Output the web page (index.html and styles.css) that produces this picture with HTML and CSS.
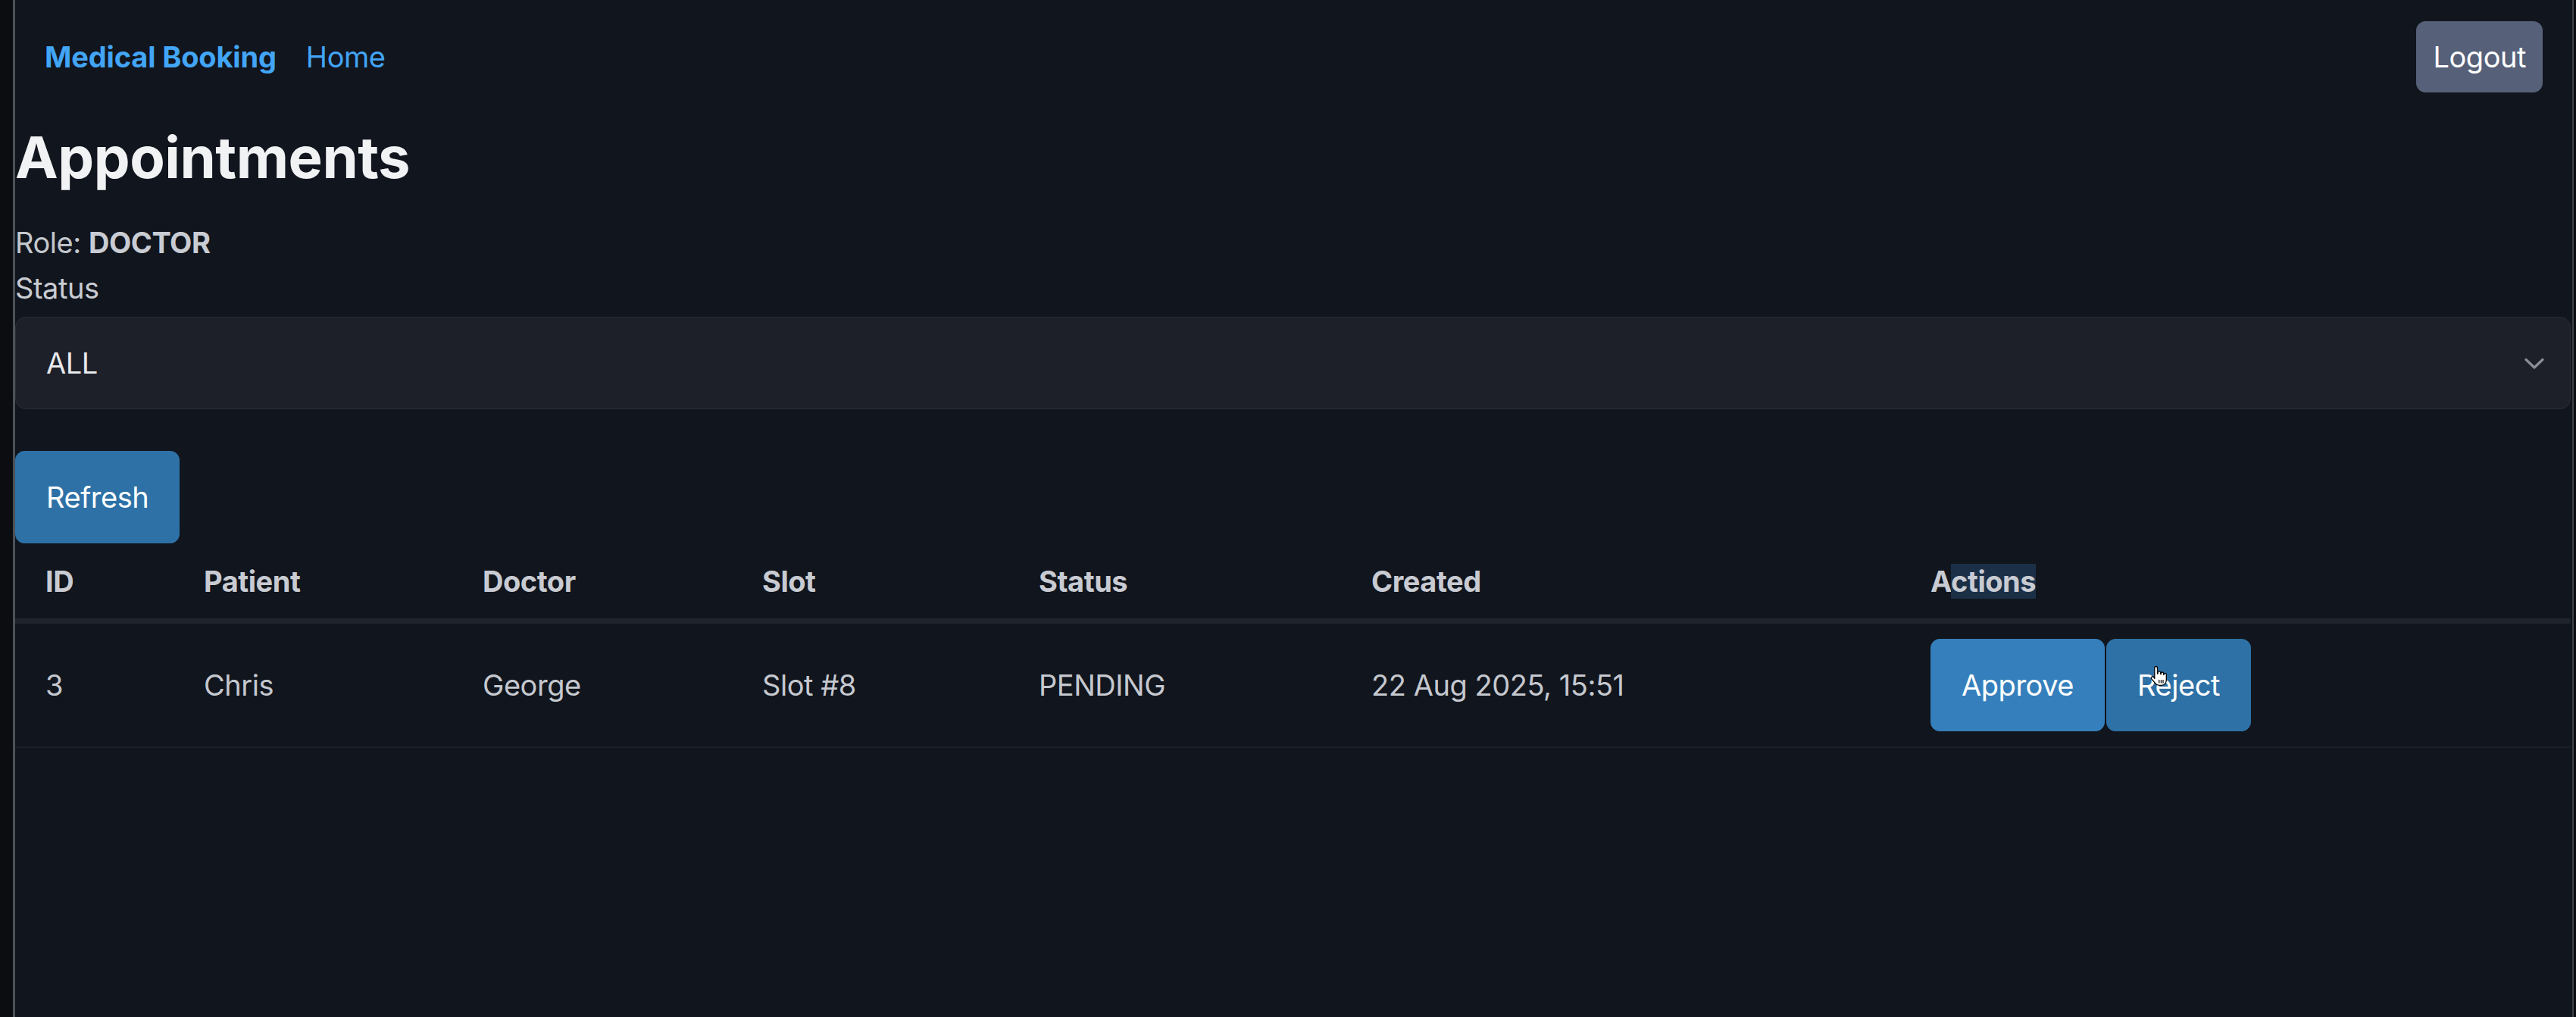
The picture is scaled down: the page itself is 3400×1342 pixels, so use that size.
FILE: index.html
```html
<!DOCTYPE html>
<html lang="en">
<head>
<meta charset="utf-8">
<title>Medical Booking</title>
<link rel="stylesheet" href="styles.css">
</head>
<body>
<div class="frame">
  <div class="page">
    <nav class="nav">
      <div class="nav-left">
        <a class="brand" href="#">Medical Booking</a>
        <a class="nav-link" href="#">Home</a>
      </div>
      <button class="btn btn-logout" type="button">Logout</button>
    </nav>
    <main class="main">
      <h1 class="title">Appointments</h1>
      <div class="role">Role: <strong>DOCTOR</strong></div>
      <label class="field-label" for="status">Status</label>
      <div class="select-wrap">
        <select id="status" class="select">
          <option>ALL</option>
          <option>PENDING</option>
          <option>APPROVED</option>
          <option>REJECTED</option>
        </select>
        <svg class="chevron" width="26" height="16" viewBox="0 0 26 16" aria-hidden="true">
          <path d="M2 2.5 L13 13 L24 2.5" fill="none" stroke="#8b8e97" stroke-width="3.2" stroke-linecap="round" stroke-linejoin="round"/>
        </svg>
      </div>
      <button class="btn btn-primary btn-refresh" type="button">Refresh</button>
      <table class="table">
        <thead>
          <tr>
            <th class="c-id">ID</th>
            <th class="c-patient">Patient</th>
            <th class="c-doctor">Doctor</th>
            <th class="c-slot">Slot</th>
            <th class="c-status">Status</th>
            <th class="c-created">Created</th>
            <th class="c-actions">A<span class="selected">ctions</span></th>
          </tr>
        </thead>
        <tbody>
          <tr>
            <td>3</td>
            <td>Chris</td>
            <td>George</td>
            <td>Slot #8</td>
            <td>PENDING</td>
            <td>22 Aug 2025, 15:51</td>
            <td>
              <div class="actions">
                <button class="btn btn-approve" type="button">Approve</button>
                <button class="btn btn-reject" type="button">Reject
                  <svg class="cursor" width="26" height="30" viewBox="0 0 26 30" aria-hidden="true">
                    <path d="M8.6 1.5c1.1 0 1.9.8 1.9 1.9V11h.6V9.6c0-1 .8-1.7 1.8-1.7s1.7.7 1.7 1.7V11.6h.6V10.6c0-.9.8-1.6 1.7-1.6s1.7.7 1.7 1.6V12.4h.5V11.8c0-.8.7-1.5 1.6-1.5s1.6.7 1.6 1.6V19.5c0 4-2.7 6.8-6.4 6.8h-3.2c-2.3 0-3.8-1-5-2.7L2.6 17.8c-.7-.9-.5-2 .4-2.6s2-.3 2.6.5L6.8 17.3V3.4c0-1.1.8-1.9 1.8-1.9z" fill="#ffffff" stroke="#000000" stroke-width="1.3" stroke-linejoin="round"/>
                    <path d="M12.8 19v4.5M15.4 19v4.5M18 19v4.5" stroke="#000000" stroke-width="1.2"/>
                  </svg>
                </button>
              </div>
            </td>
          </tr>
        </tbody>
      </table>
    </main>
  </div>
</div>
</body>
</html>
```
FILE: styles.css
```css
* {
  box-sizing: border-box;
}

html, body {
  margin: 0;
  padding: 0;
}

body {
  background: #0c0d10;
  font-family: Inter, "Noto Sans", "Liberation Sans", sans-serif;
  color: #c6c9d0;
  font-size: 38px;
  line-height: 60px;
  letter-spacing: -0.012em;
}

.frame {
  margin: 0 3px 0 17px;
  min-height: 1342px;
  background: #11151d;
  border-left: 3px solid #4b5159;
  border-right: 2px solid #3d424a;
}

.page {
  padding-right: 2px;
}

.nav {
  height: 150px;
  display: flex;
  align-items: center;
  justify-content: space-between;
  padding: 0 37px 0 39px;
}

.nav-left {
  display: flex;
  align-items: center;
  gap: 39px;
}

.brand {
  color: #42a5f5;
  font-weight: 700;
  text-decoration: none;
  letter-spacing: -0.004em;
}

.nav-link {
  color: #42a5f5;
  text-decoration: none;
}

.btn {
  font-family: inherit;
  font-size: 38px;
  line-height: 60px;
  letter-spacing: -0.012em;
  color: #ffffff;
  border: 1px solid transparent;
  border-radius: 12px;
  cursor: pointer;
}

.btn-logout {
  background: #566078;
  border-color: #566078;
  padding: 16px 21px;
}

.title {
  margin: 9px 0 35px;
  font-size: 76px;
  line-height: 96px;
  font-weight: 700;
  color: #f1f2f4;
  letter-spacing: -0.006em;
}

.role {
  font-size: 38px;
  line-height: 60px;
  color: #c4c7ce;
}

.role strong {
  font-weight: 700;
  color: #c9ccd3;
}

.field-label {
  display: block;
  font-size: 38px;
  line-height: 60px;
  color: #c9ccd2;
}

.select-wrap {
  position: relative;
  margin-top: 8px;
}

.select {
  appearance: none;
  -webkit-appearance: none;
  display: block;
  width: 100%;
  height: 122px;
  padding: 0 40px;
  background: #1e2029;
  border: 1px solid #2a2d37;
  border-radius: 14px;
  color: #e8e9ec;
  font-family: inherit;
  font-size: 38px;
  letter-spacing: -0.012em;
  outline: none;
}

.chevron {
  position: absolute;
  right: 35px;
  top: 54px;
  pointer-events: none;
}

.btn-primary {
  background: #2e71a6;
  border-color: #2e71a6;
}

.btn-refresh {
  display: block;
  margin-top: 55px;
  padding: 30px 40px;
}

.table {
  width: 100%;
  border-collapse: separate;
  border-spacing: 0;
  table-layout: fixed;
}

.table th {
  text-align: left;
  font-weight: 700;
  padding: 20px 40px 19px;
  color: #c8cbd2;
  border-bottom: 7px solid #1f232c;
}

.table td {
  padding: 20px 40px;
  vertical-align: middle;
  color: #c5c8cf;
  border-bottom: 2px solid #1b1f27;
  white-space: nowrap;
}

.c-id { width: 209px; }
.c-patient { width: 368px; }
.c-doctor { width: 369px; }
.c-slot { width: 365px; }
.c-status { width: 439px; }
.c-created { width: 738px; }

.selected {
  background: #1b3047;
}

.actions {
  display: flex;
  gap: 2px;
}

.btn-approve {
  background: #3580bc;
  border-color: #3580bc;
  padding: 30px 40px;
}

.btn-reject {
  position: relative;
  background: #2e71a6;
  border-color: #2e71a6;
  padding: 30px 40px;
}

.cursor {
  position: absolute;
  left: 56px;
  top: 34px;
  pointer-events: none;
}
```
